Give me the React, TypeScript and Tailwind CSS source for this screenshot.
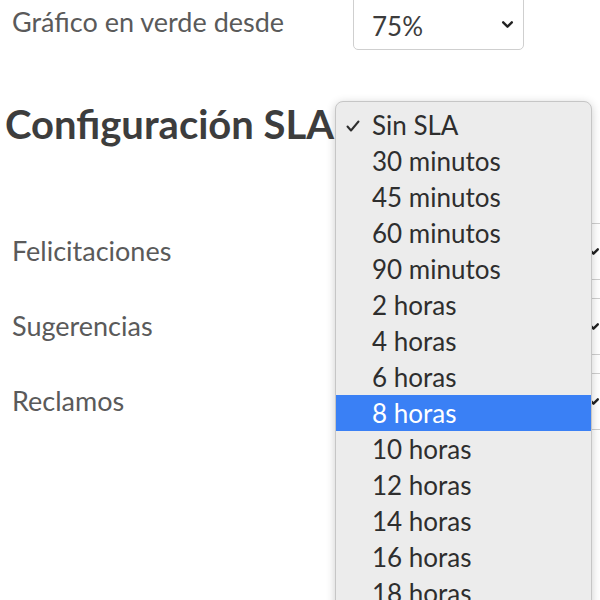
import React from 'react';

const OPTIONS = [
  'Sin SLA',
  '30 minutos',
  '45 minutos',
  '60 minutos',
  '90 minutos',
  '2 horas',
  '4 horas',
  '6 horas',
  '8 horas',
  '10 horas',
  '12 horas',
  '14 horas',
  '16 horas',
  '18 horas',
];

const Chevron: React.FC<{ className?: string }> = ({ className }) => (
  <svg viewBox="0 0 12 8" className={className} fill="none" stroke="currentColor" strokeWidth={2.2} strokeLinecap="round" strokeLinejoin="round">
    <path d="M2 2l4 4 4-4" />
  </svg>
);

const ROWS = ['Felicitaciones', 'Sugerencias', 'Reclamos'];

export default function App() {
  return (
    <div className="relative w-[600px] h-[600px] overflow-hidden bg-white font-['Lato','Liberation_Sans',sans-serif]">
      {/* Gráfico en verde */}
      <div className="flex items-center h-[60px] -mt-[10px]">
        <div className="w-[353px] shrink-0 pl-[12px] pt-[4px] text-[27px] text-[#5a5a5a]">Gráfico en verde desde</div>
        <div className="relative flex items-center w-[171px] h-[60px] pt-[12px] border border-[#cfcfcf] rounded-[5px] bg-white">
          <span className="pl-[18px] text-[26px] text-[#3c3c3c]">75%</span>
          <Chevron className="absolute right-[9px] top-[29px] w-[13px] h-[9px] text-[#222]" />
        </div>
      </div>

      {/* Configuración SLA */}
      <h2 className="mt-[50px] pl-[5px] text-[40px] leading-[48px] font-bold text-[#3d3d3d]">Configuración SLA</h2>

      <div className="mt-[75px] flex flex-col gap-[18px]">
        {ROWS.map((r) => (
          <div key={r} className="flex items-center h-[57px]">
            <div className="w-[354px] shrink-0 pl-[12px] text-[27px] text-[#5a5a5a]">{r}</div>
            <div className="relative w-[256px] h-[57px] shrink-0 border border-[#cfcfcf] rounded-[5px]">
              <Chevron className="absolute right-[9px] top-[23px] w-[13px] h-[9px] text-[#222]" />
            </div>
          </div>
        ))}
      </div>

      {/* Dropdown menu */}
      <div className="absolute left-[335px] top-[101px] w-[257px] h-[530px] pt-[5px] bg-[#ececec] border border-[#c6c6c6] rounded-[8px] shadow-[0_2px_10px_rgba(0,0,0,0.2)]">
        {OPTIONS.map((o, i) => (
          <div
            key={o}
            className={
              i === 8
                ? 'relative flex items-center h-[36px] pl-[36px] text-[26px] bg-[#3a80f5] text-white'
                : 'relative flex items-center h-[36px] pl-[36px] text-[26px] text-[#2e2e2e]'
            }
          >
            {i === 0 && (
              <svg viewBox="0 0 14 12" className="absolute left-[10px] top-[13px] w-[14px] h-[12px]" fill="none" stroke="#2e2e2e" strokeWidth={2} strokeLinecap="round" strokeLinejoin="round">
                <path d="M1.5 6.5l3.5 4L12.5 1.5" />
              </svg>
            )}
            {o}
          </div>
        ))}
      </div>
    </div>
  );
}
